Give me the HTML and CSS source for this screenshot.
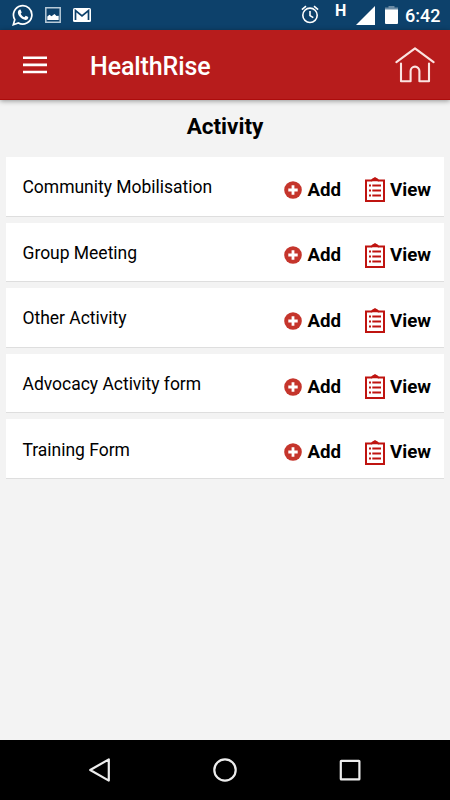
FILE: index.html
```
<!DOCTYPE html>
<html lang="en">
<head>
    <meta charset="UTF-8">
    <meta name="viewport" content="width=device-width, initial-scale=1.0">
    <title>Activity - HealthRise</title>
    <link rel="stylesheet" href="styles.css">
</head>
<body>
    <!-- icons used in every row -->
    <svg class="symbols" width="0" height="0">
        <symbol id="icon-add" viewBox="0 0 18 18">
            <circle cx="9" cy="9" r="8.8" fill="#c5352c"/>
            <path d="M9 4.3v9.4M4.3 9h9.4" stroke="#fff" stroke-width="2.8"/>
        </symbol>
        <symbol id="icon-view" viewBox="0 0 20 25">
            <path d="M1 3.4h5.6L10 1.2l3.4 2.2H19v20.5H1z" fill="#fff" stroke="#bf1410" stroke-width="2"/>
            <path d="M6 4.2L8 1.2h4l2 3z" fill="#bf1410"/>
            <path d="M4 8.5h2M4 13.5h2M4 18.5h2M7.3 8.5H16M7.3 13.5H16M7.3 18.5H16" stroke="#bf1410" stroke-width="2"/>
        </symbol>
    </svg>

    <div class="status-bar">
        <svg class="whatsapp" width="22" height="22" viewBox="0 0 22 22" fill="none" stroke="#fff" stroke-width="1.7">
            <path d="M1.3 20.7l1.5-5.1A9.2 9.2 0 1 1 6.4 19z"/>
            <path d="M7.3 5.8l1.2-.2 1.2 2.8-1 1.3c1 1.9 2 2.7 3.7 3.5l1.3-1.4 2.6 1.3c.1 2-1.2 2.9-2.8 2.9-3.8-.6-7.3-4-7.6-7.2 0-1.2.5-2.3 1.4-3z" fill="#fff" stroke="none"/>
        </svg>
        <svg class="picture" width="16" height="16" viewBox="0 0 16 16">
            <path d="M.8.8h14.4v14.4H.8z" fill="none" stroke="#b9cbd9" stroke-width="1.5"/>
            <path d="M2.3 13V9.5l2.2-1.7 2 1.5 3-2.4 2 2.2 2.2-.4V13z" fill="#fff"/>
        </svg>
        <svg class="mail" width="18" height="14" viewBox="0 0 18 14">
            <rect width="18" height="14" rx="1.5" fill="#fff"/>
            <path d="M2.5 12V2.6L9 7.8l6.5-5.2V12" fill="none" stroke="#0d416b" stroke-width="1.7"/>
        </svg>
        <svg class="alarm" width="18" height="19" viewBox="0 0 18 19" fill="none" stroke="#fff" stroke-width="1.6">
            <circle cx="9" cy="10.3" r="7.2"/>
            <path d="M9 6v4.6l3.3 2M.9 4.6L5 1.1M17.1 4.6L13 1.1"/>
        </svg>
        <span class="network">H</span>
        <svg class="signal" width="19" height="19" viewBox="0 0 19 19"><path d="M19 0v19H0z" fill="#fff"/></svg>
        <svg class="battery" width="13" height="18" viewBox="0 0 13 18">
            <path d="M3.5 0h6v1.6H13V4H0V1.6h3.5z" fill="#6c8ba4"/>
            <path d="M0 3.6h13V17a1 1 0 0 1-1 1H1a1 1 0 0 1-1-1z" fill="#fff"/>
        </svg>
        <span class="time">6:42</span>
    </div>

    <header>
        <svg class="menu" width="24" height="18" viewBox="0 0 24 18">
            <path d="M0 1.8h24M0 8.9h24M0 16h24" stroke="#fff" stroke-width="2.6"/>
        </svg>
        <div class="logo">HealthRise</div>
        <svg class="home" width="40" height="36" viewBox="0 0 40 36" fill="none" stroke="#fbe3e1" stroke-width="2.1" stroke-linecap="round" stroke-linejoin="round">
            <path d="M1.4 15.2L20 1.3l18.6 13.9"/>
            <path d="M6 16.5v17.7h9.6V24a4.4 4.4 0 0 1 8.8 0v10.2H34V16.5"/>
        </svg>
    </header>

    <main>
        <h1>Activity</h1>
        <ul class="activities">
            <li>
                <span class="name">Community Mobilisation</span>
                <a class="add"><svg><use href="#icon-add"/></svg>Add</a>
                <a class="view"><svg><use href="#icon-view"/></svg>View</a>
            </li>
            <li>
                <span class="name">Group Meeting</span>
                <a class="add"><svg><use href="#icon-add"/></svg>Add</a>
                <a class="view"><svg><use href="#icon-view"/></svg>View</a>
            </li>
            <li>
                <span class="name">Other Activity</span>
                <a class="add"><svg><use href="#icon-add"/></svg>Add</a>
                <a class="view"><svg><use href="#icon-view"/></svg>View</a>
            </li>
            <li>
                <span class="name">Advocacy Activity form</span>
                <a class="add"><svg><use href="#icon-add"/></svg>Add</a>
                <a class="view"><svg><use href="#icon-view"/></svg>View</a>
            </li>
            <li>
                <span class="name">Training Form</span>
                <a class="add"><svg><use href="#icon-add"/></svg>Add</a>
                <a class="view"><svg><use href="#icon-view"/></svg>View</a>
            </li>
        </ul>
    </main>

    <nav class="system-nav">
        <svg width="24" height="24" viewBox="0 0 24 24"><path d="M20.8 1.4v21.2L2.2 12z"/></svg>
        <svg width="24" height="24" viewBox="0 0 24 24"><circle cx="12" cy="12" r="10.7"/></svg>
        <svg width="24" height="24" viewBox="0 0 24 24"><rect x="2.8" y="2.8" width="18.6" height="18.6" rx=".5"/></svg>
    </nav>
</body>
</html>
```
FILE: styles.css
```
* {
    box-sizing: border-box;
}

body {
    font-family: Roboto, sans-serif;
    margin: 0;
    height: 100vh;
    display: flex;
    flex-direction: column;
    overflow: hidden;
    background-color: #f3f3f3;
    color: #000;
}

svg {
    display: block;
    flex-shrink: 0;
}

.symbols {
    position: absolute;
}

/* Phone status bar */
.status-bar {
    display: flex;
    align-items: flex-start;
    height: 30px;
    padding-left: 12px;
    background-color: #0d416b;
    color: #fff;
}

.whatsapp {
    margin-top: 4px;
}

.picture {
    margin: 7px 0 0 11px;
}

.mail {
    margin: 8px 0 0 12px;
}

.alarm {
    margin: 5px 0 0 210px;
}

.network {
    width: 12px;
    margin: 3px 0 0 16px;
    font-size: 16px;
    line-height: 16px;
    font-weight: 700;
}

.signal {
    margin: 6px 0 0 9px;
}

.battery {
    margin: 6px 0 0 10px;
}

.time {
    margin: 5px 0 0 7px;
    font-size: 18px;
    line-height: 22px;
    font-weight: 500;
}

header {
    display: flex;
    align-items: center;
    height: 70px;
    padding: 0 15px 0 23px;
    background-color: #b71c1c;
    border-bottom: 1px solid #ac0c0c;
    box-shadow: 0 1px 5px rgba(0, 0, 0, 0.4);
    color: #fff;
}

.logo {
    margin: 5px auto 0 43px;
    font-size: 25px;
    line-height: 30px;
    font-weight: 500;
    letter-spacing: -0.1px;
}

.home {
    margin-top: 1px;
}

main {
    flex: 1;
    padding: 11px 6px 0;
}

h1 {
    margin: 0 0 16px;
    font-size: 22.5px;
    line-height: 30px;
    font-weight: 700;
    text-align: center;
}

.activities {
    list-style: none;
    margin: 0;
    padding: 0;
}

.activities li {
    display: flex;
    align-items: center;
    height: 59.6px;
    margin-bottom: 6px;
    padding: 7px 13px 0 16.5px;
    background-color: #fff;
    border-bottom: 1.6px solid #dedede;
}

.name {
    flex: 1;
    margin-top: -5px;
    font-size: 17.5px;
    line-height: 22px;
    letter-spacing: -0.02px;
}

.add,
.view {
    display: flex;
    align-items: center;
    font-size: 18.7px;
    line-height: 24px;
    font-weight: 700;
}

.add svg {
    width: 18px;
    height: 18px;
    margin-right: 5px;
}

.view {
    margin-left: 24px;
}

.view svg {
    width: 20px;
    height: 25px;
    margin-right: 5px;
}

/* Android navigation buttons */
.system-nav {
    display: flex;
    justify-content: space-between;
    align-items: center;
    height: 60px;
    padding: 0 88px;
    background-color: #000;
}

.system-nav svg {
    fill: none;
    stroke: #ededed;
    stroke-width: 2.2;
    stroke-linejoin: round;
}
```
